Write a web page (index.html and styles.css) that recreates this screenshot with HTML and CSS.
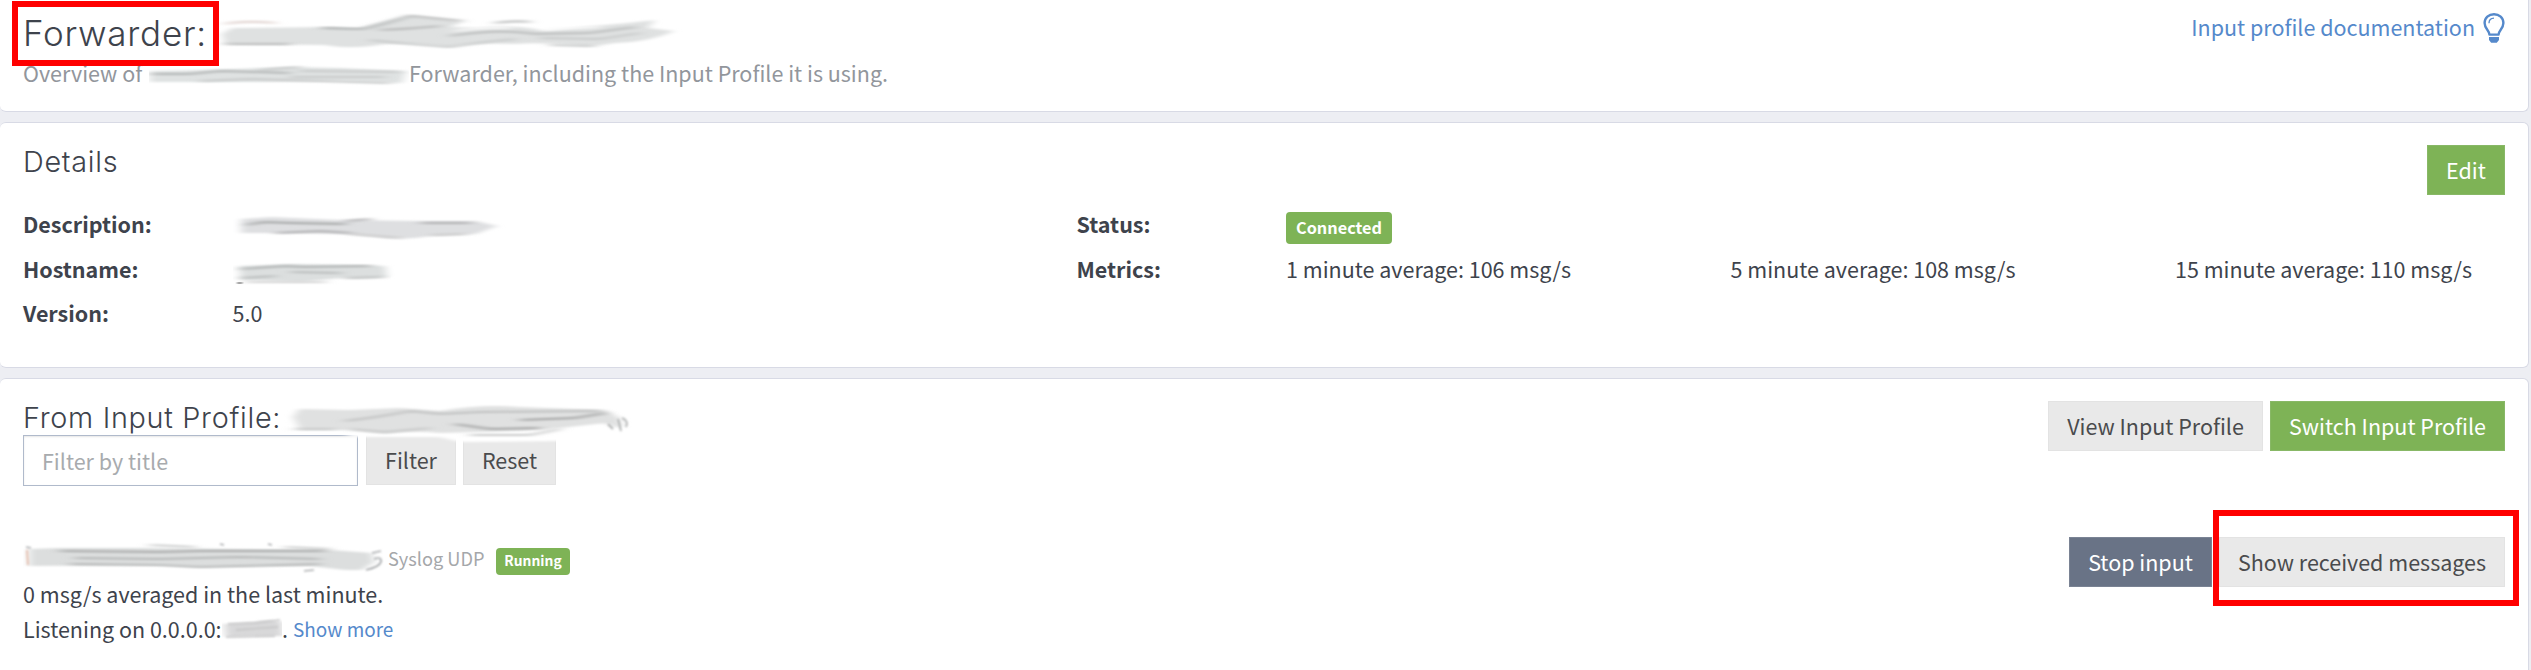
FILE: index.html
```html
<!DOCTYPE html>
<html lang="en">
<head>
<meta charset="utf-8">
<title>Forwarder</title>
<link rel="stylesheet" href="styles.css">
</head>
<body>
<svg class="defs" width="0" height="0">
  <defs>
    <filter id="soft" x="-5%" y="-30%" width="110%" height="160%"><feGaussianBlur stdDeviation="4 1.3"/></filter>
    <filter id="fine" x="-5%" y="-60%" width="110%" height="220%"><feGaussianBlur stdDeviation="6 0.9"/></filter>
    <filter id="edge" x="-30%" y="-30%" width="160%" height="160%"><feGaussianBlur stdDeviation="0.8"/></filter>
  </defs>
</svg>
<main class="page">
  <section class="card card-header">
    <div>
      <h1 class="title">
        <span class="title-label marked">Forwarder:</span>
        <svg class="smudge" width="466" height="40" viewBox="219 13 466 40">
          <path filter="url(#soft)" fill="#dfe1e1" d="M222 34 L232 28 L330 27 L360 29 Q385 20 412 16 Q440 18 462 22 L450 27 L478 28 Q515 24 545 31 Q590 26 628 23 L655 20 L648 28 L674 31 Q650 42 615 43 Q600 46 585 46 Q540 42 515 44 Q475 42 450 47 Q415 43 385 44 Q350 50 325 45 L225 44 Z"/>
          <g filter="url(#fine)" fill="none" stroke-width="2">
            <path stroke="#e0d2cf" d="M225 24 Q245 20 275 23"/>
            <path stroke="#acafaf" d="M322 28 L362 29 Q385 24 412 15"/>
            <path stroke="#babbbb" d="M380 30 Q410 29 440 26 M225 44 L290 44 M412 16 L462 21"/>
            <path stroke="#babcbc" d="M495 23 Q515 20 530 22 M450 36 Q500 28 535 34 L590 33 L635 27"/>
            <path stroke="#c8caca" d="M370 40 L400 43 L450 47 Q480 42 515 39 M540 38 L600 39 L640 33 M550 45 L595 46"/>
            <path stroke="#fafafa" d="M455 31 Q480 27 510 28 M545 29 L600 27"/>
          </g>
        </svg>
      </h1>
      <p class="subtitle">
        <span class="subtitle-start">Overview of</span>
        <svg class="smudge" width="260" height="30" viewBox="149 57 260 30">
          <path filter="url(#soft)" fill="#dfe2e2" d="M150 70 L205 69 L290 66 L340 67 L406 70 L402 82 L340 80 L260 81 L150 81 Z"/>
          <g filter="url(#fine)" fill="none" stroke-width="1.8">
            <path stroke="#b2b5b5" d="M152 73 L190 73 L220 70 L290 72"/>
            <path stroke="#c8caca" d="M260 69 L300 66 M200 80 L250 78 L390 82 M300 70 L400 71 M290 76 L385 76"/>
          </g>
        </svg>
        <span>Forwarder, including the Input Profile it is using.</span>
      </p>
    </div>
    <a class="doc-link" href="#">Input profile documentation
      <svg class="bulb" width="22" height="32" viewBox="0 0 22 32">
        <path fill="none" stroke="#5589cb" stroke-width="2.4" stroke-linejoin="round" d="M6.4 22.6 C6.4 18.5 1.6 16.6 1.6 11 C1.6 5.7 5.8 2.2 11 2.2 C16.2 2.2 20.4 5.7 20.4 11 C20.4 16.6 15.6 18.5 15.6 22.6 Z"/>
        <path fill="none" stroke="#5589cb" stroke-width="1.3" d="M6 11.2 C6 8.2 8 6.3 11 6.2"/>
        <path fill="#5589cb" d="M6 25 H16 V28 L13.8 30.8 H8.2 L6 28 Z"/>
      </svg>
    </a>
  </section>

  <section class="card card-details">
    <div class="card-top">
      <h2 class="heading">Details</h2>
      <button class="btn btn-success btn-edit">Edit</button>
    </div>
    <div class="details">
      <b>Description:</b>
      <svg class="smudge" width="280" height="44" viewBox="232 202 280 44">
        <path filter="url(#soft)" fill="#dedfe1" d="M240 219 L270 217 L340 220 L420 221 L475 221 L496 226 L475 234 L430 236 Q400 241 370 236 L340 234 L285 233 L240 233 Z"/>
        <g filter="url(#fine)" fill="none" stroke-width="1.8">
          <path stroke="#a6a8a8" d="M246 225 L262 222 L290 223 L345 224"/>
          <path stroke="#b0b0b2" d="M275 233 L320 231 L350 233 M420 223 L470 223 M345 221 L370 219"/>
          <path stroke="#cacaca" d="M350 234 L400 238 M430 235 L465 234"/>
        </g>
      </svg>
      <b>Status:</b>
      <span class="badge badge-lg span-3">Connected</span>
      <b>Hostname:</b>
      <svg class="smudge" width="280" height="44" viewBox="232 246 280 44">
        <path filter="url(#soft)" fill="#dcdfdf" d="M238 265 L290 263 L350 264 L384 265 L386 276 L340 277 L300 281 L240 279 Z"/>
        <g filter="url(#fine)" fill="none" stroke-width="1.8">
          <path stroke="#b0b3b3" d="M240 268 L285 265 L300 266 L370 265"/>
          <path stroke="#babdbd" d="M240 277 L275 275 M290 271 L340 272 M345 277 L382 276"/>
          <path stroke="#d4d4d4" d="M245 281 L325 281"/>
        </g>
        <path filter="url(#edge)" fill="none" stroke-width="2" stroke="#666" d="M236 282 H241 V282.1"/>
      </svg>
      <b>Metrics:</b>
      <span>1 minute average: 106 msg/s</span>
      <span>5 minute average: 108 msg/s</span>
      <span>15 minute average: 110 msg/s</span>
      <b>Version:</b>
      <span>5.0</span>
    </div>
  </section>

  <section class="card card-profile">
    <div class="card-top">
      <div>
        <h2 class="heading heading-profile">
          <span class="profile-label">From Input Profile:</span>
          <svg class="smudge smudge-over" width="346" height="34" viewBox="288 401 346 34">
            <path filter="url(#soft)" fill="#fff" d="M345 433 Q450 428 575 433 Q590 436 560 441 L460 442 L440 437 L350 437 Z"/>
            <path filter="url(#soft)" fill="#e0e1e1" d="M293 417 L299 409 L350 410 L400 408 L440 411 Q480 404 520 407 L605 410 L620 418 L622 426 L616 428 L605 423 L560 428 L520 431 L440 433 Q410 430 385 434 L350 430 L300 430 Z"/>
            <g filter="url(#fine)" fill="none" stroke-width="2">
              <path stroke="#c0c1c1" d="M345 421 Q380 417 410 411 L440 414 L480 412 L600 411"/>
              <path stroke="#a4a5a5" d="M520 420 L575 418 L605 413 M455 424 L490 429 L540 428"/>
              <path stroke="#c8c9c9" d="M350 429 L385 432 L430 428 M470 435 L530 435 L560 429 M295 429 L335 429"/>
            </g>
            <path filter="url(#edge)" fill="none" stroke="#aeb0b0" stroke-width="1.8" d="M608 424 L613 429 M618 419 L621 431 M622 418 Q629 421 626 427"/>
          </svg>
        </h2>
        <div class="filter">
          <input class="filter-input" type="text" placeholder="Filter by title">
          <button class="btn btn-filter">Filter</button>
          <button class="btn btn-reset">Reset</button>
        </div>
      </div>
      <div class="profile-actions">
        <button class="btn btn-view">View Input Profile</button>
        <button class="btn btn-success btn-switch">Switch Input Profile</button>
      </div>
    </div>
    <div class="input-row">
      <div class="input-info">
        <div class="input-title">
          <svg class="smudge" width="365" height="35" viewBox="23 541 365 35">
            <path filter="url(#soft)" fill="#dcdede" d="M29 549 L60 548 L150 548 L330 550 L372 553 L374 562 L362 570 L345 570 L310 566 L200 567 L160 565 L29 566 Z"/>
            <g filter="url(#fine)" fill="none" stroke-width="1.9">
              <path stroke="#aaacac" d="M60 551 L160 552 L200 551 L325 551"/>
              <path stroke="#b6b8b8" d="M75 558 L160 559 L240 557 L320 559 M70 564 L160 565 L200 567 L320 564"/>
              <path stroke="#cccece" d="M150 545 L195 547 M285 547 L330 549"/>
            </g>
            <g filter="url(#edge)" fill="none" stroke-width="1.2">
              <path stroke="#85888b" d="M26 547 L31 548 M220 544 L224 545 M268 544 L272 545 M304 571 L314 570"/>
              <path stroke="#e6bfae" stroke-width="2" d="M27 550 L28 565"/>
              <path stroke="#85898c" d="M381 551 L372 553 M374 559 Q382 556 381 562 Q379 567 366 570"/>
            </g>
          </svg>
          <span class="input-type">Syslog UDP</span>
          <span class="badge badge-sm">Running</span>
        </div>
        <div class="input-line">0 msg/s averaged in the last minute.</div>
        <div class="input-line listening">
          <span class="address">Listening on 0.0.0.0:</span>
          <svg class="smudge" width="60" height="35" viewBox="222 611 60 35">
            <path filter="url(#soft)" fill="#d8d8d9" d="M224 624 L255 622 L268 620 L282 622 L283 636 L226 637 Z"/>
            <g filter="url(#edge)" fill="none" stroke-width="1.3" stroke="#c4c4c5">
              <path d="M228 624 L255 623 L280 620 M236 630 L278 627 M226 637 L275 636"/>
            </g>
          </svg>
          <span class="period">.</span>
          <a class="more-link" href="#">Show more</a>
        </div>
      </div>
      <div class="input-actions">
        <button class="btn btn-stop">Stop input</button>
        <span class="marked-wide"><button class="btn btn-show">Show received messages</button></span>
      </div>
    </div>
  </section>
</main>
</body>
</html>
```
FILE: styles.css
```css
*, *::before, *::after { box-sizing: border-box; }

body {
  margin: 0;
  height: 670px;
  overflow: hidden;
  background: #edeef3;
  color: #3e434c;
  font: 21.5px/30px "Noto Sans CJK JP", "Open Sans", sans-serif;
}

h1, h2, p { margin: 0; }
a { color: #5589cb; text-decoration: none; }
svg { display: block; flex: none; }
b { font-size: 21.5px; }
.defs { position: absolute; }

.page {
  display: flex;
  flex-direction: column;
  gap: 10px;
  width: 2529px;
}

.card {
  background: #fff;
  border: 1px solid #d8dae5;
  border-left-width: 0;
  border-radius: 6px;
  padding: 22px 23px 0;
}

.card-header {
  display: flex;
  justify-content: space-between;
  align-items: flex-start;
  height: 112px;
  border-top-width: 0;
  border-top-left-radius: 0;
  border-top-right-radius: 0;
  padding-top: 13px;
}

.title {
  display: flex;
  font: 350 35px/40px Inter, sans-serif;
  letter-spacing: 0.75px;
  height: 45px;
}
.title-label { width: 196px; position: relative; }

.marked::after {
  content: "";
  position: absolute;
  left: -11px;
  top: -12px;
  width: 207px;
  height: 65px;
  border: 6px solid #f00;
}

.subtitle { display: flex; color: #92969c; }
.subtitle-start { width: 126px; white-space: nowrap; }

.doc-link { display: flex; gap: 8px; margin-top: -1px; }

.card-details { height: 246px; }
.card-top { display: flex; justify-content: space-between; align-items: flex-start; }
.card-details .card-top { height: 57px; }

.heading {
  font: 350 28.8px/34px Inter, sans-serif;
  letter-spacing: 0.7px;
}

.details {
  display: grid;
  grid-template-columns: 209.5px 844px 209.5px 444.5px 444.5px 1fr;
  grid-auto-rows: 44.5px;
  line-height: 44.5px;
}
.span-3 { grid-column: span 3; }

.badge {
  justify-self: start;
  background: #7eb356;
  color: #fff;
  font-weight: 700;
  border-radius: 4px;
  text-align: center;
}
.badge-lg { width: 106px; height: 32px; margin-top: 10px; font-size: 16.27px; line-height: 30px; }
.badge-sm { width: 74px; height: 27px; margin-top: 7px; font-size: 13.84px; line-height: 24px; }

.btn {
  height: 50px;
  border: 1px solid #e3e3e3;
  background: #e9e9e9;
  color: #4a4b4d;
  font: inherit;
  line-height: 48px;
  padding: 0;
  white-space: nowrap;
}
.btn-success { background: #7eb356; border-color: #88b866; color: #fff; }
.btn-edit { width: 78px; }
.btn-filter { width: 90px; }
.btn-reset { width: 93px; }
.btn-view { width: 215px; }
.btn-switch { width: 235px; }
.btn-stop { width: 143px; background: #697386; border-color: #7a8394; color: #fff; }
.btn-show { width: 286px; display: block; }

.card-profile { height: 320px; }
.heading-profile { display: flex; }
.profile-label { width: 265px; white-space: nowrap; }
.smudge-over { position: relative; overflow: visible; z-index: 1; }

.filter { display: flex; gap: 7px; }
.filter-input {
  width: 335px;
  height: 51px;
  margin-right: 1px;
  border: 1px solid #b0bacb;
  padding: 0 18px;
  font: inherit;
  box-shadow: inset 0 1px 2px rgba(0, 0, 0, 0.1);
}
.filter-input::placeholder { color: #a8abae; opacity: 1; }
.profile-actions { display: flex; gap: 7px; }

.input-row { display: flex; justify-content: space-between; margin-top: 51px; }
.input-info { padding-top: 4px; line-height: 35px; white-space: nowrap; }
.input-title { display: flex; height: 35px; line-height: 34px; }
.input-type { width: 108px; font-size: 18.2px; color: #a5a7aa; }
.listening { display: flex; }
.address { width: 199px; }
.period { width: 11px; }
.more-link { font-size: 18.97px; }

.input-actions { display: flex; gap: 7px; }
.marked-wide { position: relative; }
.marked-wide::after {
  content: "";
  position: absolute;
  left: -6px;
  top: -27px;
  width: 306px;
  height: 96px;
  border: 6px solid #f00;
}
```
